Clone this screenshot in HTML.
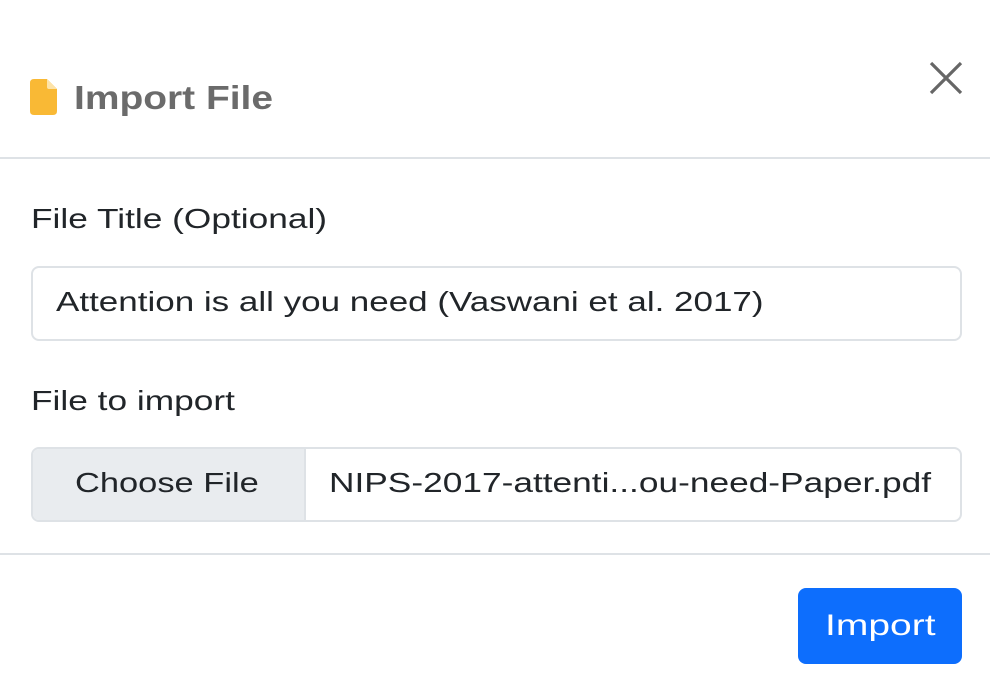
<!DOCTYPE html>
<html><head><style>
body{margin:0;width:990px;height:694px;background:#fff;font-family:"Liberation Sans",sans-serif;position:relative;overflow:hidden;color:#212529}
.a{position:absolute;white-space:nowrap}
.s{transform:scaleX(1.26);transform-origin:0 0}
</style></head><body>
<svg class="a" style="left:30px;top:79px" width="27" height="36" viewBox="0 0 27 36"><path d="M4 0H17L27 10V32Q27 36 23 36H4Q0 36 0 32V4Q0 0 4 0Z" fill="#f9b935"/><path d="M17 0V8Q17 10 19 10H27Z" fill="#fde3a8"/></svg>
<div class="a s" style="left:74px;top:79px;font-size:33px;font-weight:bold;color:#6b6b6b;transform:scaleX(1.18)">Import File</div>
<svg class="a" style="left:929px;top:61px" width="34" height="34" viewBox="0 0 34 34"><path d="M2 2L32 32M32 2L2 32" stroke="#666" stroke-width="3.2"/></svg>
<div class="a" style="left:0;top:157px;width:990px;height:2px;background:#dee2e6"></div>
<div class="a s" style="left:31px;top:203px;font-size:28px">File Title (Optional)</div>
<div class="a" style="left:31px;top:266px;width:927px;height:71px;border:2px solid #dee2e6;border-radius:8px"></div>
<div class="a s" style="left:56px;top:286px;font-size:28px;transform:scaleX(1.25)">Attention is all you need (Vaswani et al. 2017)</div>
<div class="a s" style="left:31px;top:385px;font-size:28px">File to import</div>
<div class="a" style="left:31px;top:447px;width:927px;height:71px;border:2px solid #dee2e6;border-radius:8px;overflow:hidden">
<div style="position:absolute;left:0;top:0;width:271px;height:71px;background:#e9ecef;border-right:2px solid #dee2e6"></div></div>
<div class="a s" style="left:75px;top:467px;font-size:28px;transform:scaleX(1.23)">Choose File</div>
<div class="a s" style="left:329px;top:467px;font-size:28px">NIPS-2017-attenti...ou-need-Paper.pdf</div>
<div class="a" style="left:0;top:553px;width:990px;height:2px;background:#dee2e6"></div>
<div class="a" style="left:798px;top:588px;width:164px;height:76px;background:#0d6efd;border-radius:8px"></div>
<div class="a s" style="left:825px;top:609px;color:#fff;font-size:30px;transform:scaleX(1.3)">Import</div>
</body></html>
